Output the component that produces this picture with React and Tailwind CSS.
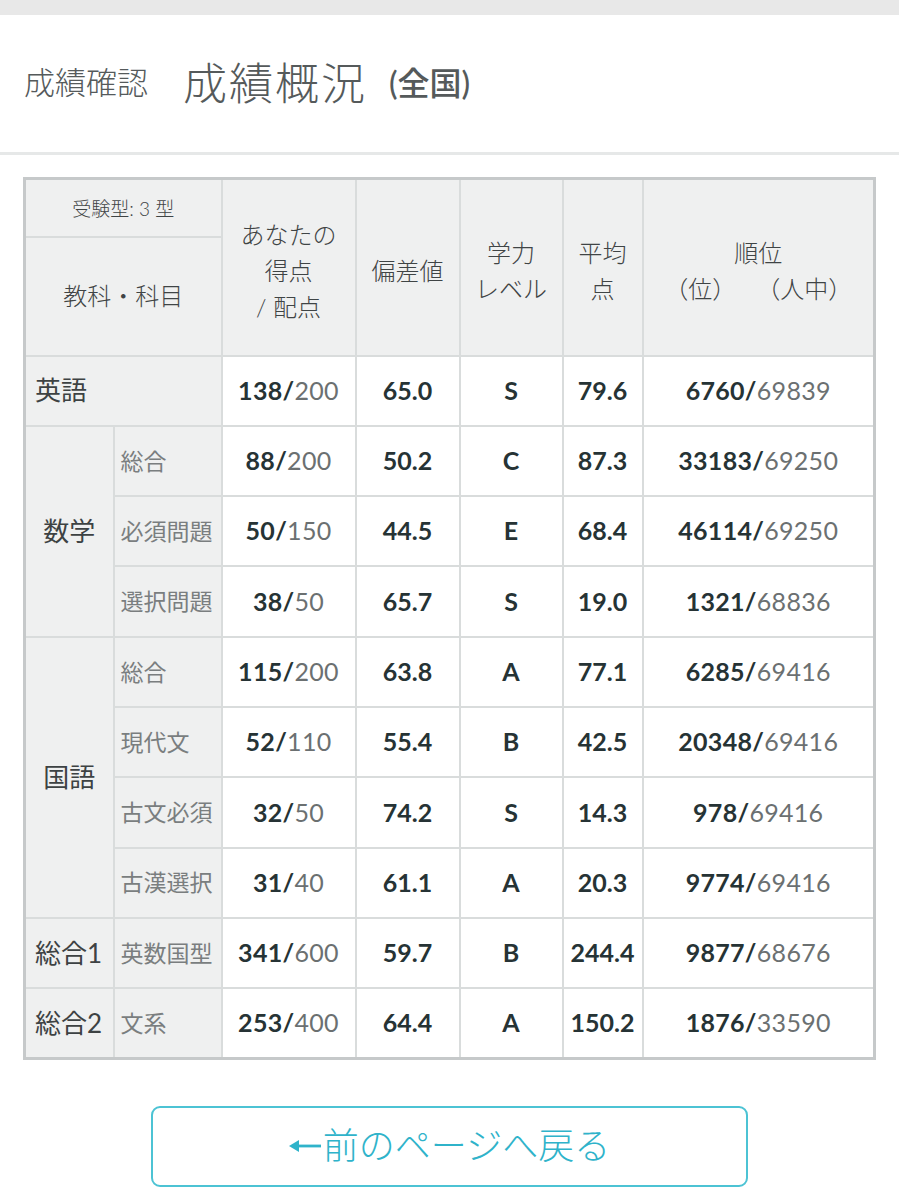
const rows = [
  { main: "英語", span: 0, score: "138", full: "200", dev: "65.0", lv: "S", avg: "79.6", rank: "6760", total: "69839" },
  { main: "数学", span: 3, sub: "総合", score: "88", full: "200", dev: "50.2", lv: "C", avg: "87.3", rank: "33183", total: "69250" },
  { sub: "必須問題", score: "50", full: "150", dev: "44.5", lv: "E", avg: "68.4", rank: "46114", total: "69250" },
  { sub: "選択問題", score: "38", full: "50", dev: "65.7", lv: "S", avg: "19.0", rank: "1321", total: "68836" },
  { main: "国語", span: 4, sub: "総合", score: "115", full: "200", dev: "63.8", lv: "A", avg: "77.1", rank: "6285", total: "69416" },
  { sub: "現代文", score: "52", full: "110", dev: "55.4", lv: "B", avg: "42.5", rank: "20348", total: "69416" },
  { sub: "古文必須", score: "32", full: "50", dev: "74.2", lv: "S", avg: "14.3", rank: "978", total: "69416" },
  { sub: "古漢選択", score: "31", full: "40", dev: "61.1", lv: "A", avg: "20.3", rank: "9774", total: "69416" },
  { main: "総合1", span: 1, sub: "英数国型", score: "341", full: "600", dev: "59.7", lv: "B", avg: "244.4", rank: "9877", total: "68676" },
  { main: "総合2", span: 1, sub: "文系", score: "253", full: "400", dev: "64.4", lv: "A", avg: "150.2", rank: "1876", total: "33590" },
]

const cell = "border-2 border-[#d9dcdc]"
const head = `${cell} bg-[#eff0f0] leading-[36px] font-light text-[#3f4445] text-center align-middle`

function Ratio({ a, b }) {
  return (
    <span className="text-[25px] tracking-[0.3px]">
      <span className="font-bold text-[#263335]">{a}/</span>
      <span className="text-[#6b7071]">{b}</span>
    </span>
  )
}

export default function App() {
  return (
    <div className="w-[899px] min-h-[1200px] bg-white" style={{ fontFamily: "Lato, 'Noto Sans CJK JP', sans-serif" }}>
      {/* top bar */}
      <div className="h-[15px] bg-[#e8e8e8]" />

      {/* title */}
      <div className="h-[140px] flex items-center pl-[24px] pb-[2px] border-b-[3px] border-[#e6e8e8] text-[#555a5b]">
        <span className="text-[31px] leading-none font-light">成績確認</span>
        <span className="ml-[35px] text-[44px] leading-none font-light tracking-[2px]">成績概況</span>
        <span className="ml-[22px] text-[32px] leading-none font-medium">(全国)</span>
      </div>

      <div className="pt-[22px] px-[23px]">
        <table className="w-[853px] table-fixed border-collapse border-[3px] border-[#c6c9ca]">
          <colgroup>
            <col className="w-[89px]" />
            <col className="w-[108px]" />
            <col className="w-[134px]" />
            <col className="w-[104px]" />
            <col className="w-[103px]" />
            <col className="w-[80px]" />
            <col />
          </colgroup>
          <thead>
            <tr className="h-[58px]">
              <th colSpan={2} className={`${head} text-[19px] pt-[2px]`}>受験型: 3 型</th>
              <th rowSpan={2} className={`${head} text-[24px] pt-2`}>あなたの<br />得点<br />/ 配点</th>
              <th rowSpan={2} className={`${head} text-[24px] pt-2`}>偏差値</th>
              <th rowSpan={2} className={`${head} text-[24px] pt-2`}>学力<br />レベル</th>
              <th rowSpan={2} className={`${head} text-[24px] pt-2`}>平均<br />点</th>
              <th rowSpan={2} className={`${head} text-[24px] pt-2`}>順位<br /><span className="pr-[2px]">（位）</span><span className="pl-[30px]">（人中）</span></th>
            </tr>
            <tr className="h-[119px]">
              <th colSpan={2} className={`${head} text-[24px]`}>教科・科目</th>
            </tr>
          </thead>
          <tbody>
            {rows.map((r, i) => (
              <tr key={i} className="h-[70.3px]">
                {r.span === 0 && (
                  <td colSpan={2} className={`${cell} bg-[#eff0f0] pl-[9px] text-[26px] text-[#3d4243]`}>{r.main}</td>
                )}
                {r.span > 0 && (
                  <td
                    rowSpan={r.span}
                    className={`${cell} bg-[#eff0f0] text-[26px] text-[#3d4243] ${r.span > 1 ? "text-center" : "pl-[9px]"}`}
                  >
                    {r.main}
                  </td>
                )}
                {r.sub && (
                  <td className={`${cell} bg-[#eff0f0] pl-[6px] text-[23px] text-[#7a7e7f] whitespace-nowrap`}>{r.sub}</td>
                )}
                <td className={`${cell} text-center`}><Ratio a={r.score} b={r.full} /></td>
                <td className={`${cell} text-center text-[25px] font-bold text-[#263335]`}>{r.dev}</td>
                <td className={`${cell} text-center text-[25px] font-bold text-[#263335]`}>{r.lv}</td>
                <td className={`${cell} text-center text-[25px] font-bold text-[#263335]`}>{r.avg}</td>
                <td className={`${cell} text-center`}><Ratio a={r.rank} b={r.total} /></td>
              </tr>
            ))}
          </tbody>
        </table>
      </div>

      {/* back button */}
      <div className="pt-[46px] flex justify-center">
        <button className="w-[597px] h-[81px] border-2 border-[#4cc3d4] rounded-[9px] bg-white text-[#2fb3ca] text-[36px] font-light flex items-center justify-center pb-[2px]">
          <svg width="32" height="14" viewBox="0 0 32 14" className="mr-[2px] mt-[2px]">
            <path d="M0 7 L10 1 L10 13 Z" fill="#2fb3ca" />
            <rect x="9" y="5.6" width="23" height="2.8" fill="#2fb3ca" />
          </svg>
          前のページへ戻る
        </button>
      </div>
    </div>
  )
}
